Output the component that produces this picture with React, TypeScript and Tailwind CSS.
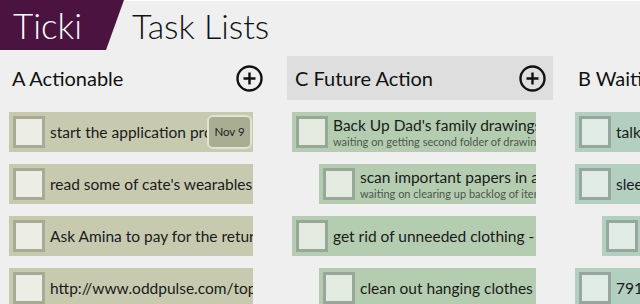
import React from "react";

type Task = {
  title: string;
  note?: string;
  due?: string;
  child?: boolean;
};

type Column = {
  name: string;
  active?: boolean;
  card: string;
  box: string;
  boxBorder: string;
  tasks: Task[];
};

const columns: Column[] = [
  {
    name: "A Actionable",
    card: "bg-[#c8cab0]",
    box: "bg-[#ecede5]",
    boxBorder: "border-[#a7aa94]",
    tasks: [
      { title: "start the application process", due: "Nov 9" },
      { title: "read some of cate's wearables articles" },
      { title: "Ask Amina to pay for the return shipping" },
      { title: "http://www.oddpulse.com/top-10-tips" },
    ],
  },
  {
    name: "C Future Action",
    active: true,
    card: "bg-[#b4cdb0]",
    box: "bg-[#e3ebe1]",
    boxBorder: "border-[#98a797]",
    tasks: [
      {
        title: "Back Up Dad's family drawings on the drive",
        note: "waiting on getting second folder of drawings",
      },
      {
        title: "scan important papers in accordion file",
        note: "waiting on clearing up backlog of items",
        child: true,
      },
      { title: "get rid of unneeded clothing - donate" },
      { title: "clean out hanging clothes closet", child: true },
    ],
  },
  {
    name: "B Waiting",
    card: "bg-[#b3cfc0]",
    box: "bg-[#e1ebe6]",
    boxBorder: "border-[#96a89e]",
    tasks: [
      { title: "talk to Mike about the lease" },
      { title: "sleeping bag back from Tom" },
      { title: "hear back about the quote", child: true },
      { title: "791 Main St paperwork" },
    ],
  },
];

function PlusCircle() {
  return (
    <svg width="27" height="27" viewBox="0 0 27 27" className="shrink-0">
      <circle cx="13.5" cy="13.5" r="12" fill="none" stroke="#111" strokeWidth="2.4" />
      <path d="M13.5 7.5v12M7.5 13.5h12" stroke="#111" strokeWidth="2.4" />
    </svg>
  );
}

function TaskCard({ task, col }: { task: Task; col: Column }) {
  return (
    <div
      className={`flex h-[40px] items-center overflow-hidden ${col.card} ${
        task.child ? "ml-[32px] w-[217px]" : "ml-[5px] w-[244px]"
      }`}
    >
      <div
        className={`ml-[4px] h-[32px] w-[32px] shrink-0 border-[3px] ${col.box} ${col.boxBorder}`}
      />
      <div className="ml-[5px] min-w-0 flex-1 overflow-hidden whitespace-nowrap">
        <div className="text-[15.5px] leading-[19px] text-[#1a1a1a]">{task.title}</div>
        {task.note && (
          <div className="text-[11px] leading-[14px] text-[#4d574c]">{task.note}</div>
        )}
      </div>
      {task.due && (
        <div className="mr-[1px] flex h-[34px] w-[45px] shrink-0 items-center justify-center rounded-[6px] border-2 border-[#e2e3d4] bg-[#a9ae92] text-[11.5px] text-[#222]">
          {task.due}
        </div>
      )}
    </div>
  );
}

export default function App() {
  return (
    <div className="h-[304px] w-[640px] overflow-hidden bg-[#efefef] font-['Lato','Open_Sans',sans-serif]">
      {/* Title bar */}
      <div className="flex h-[50px]">
        <div className="flex h-full w-[124px] shrink-0 items-center bg-[#4a1340] pl-[13px] [clip-path:polygon(0_0,124px_0,106px_100%,0_100%)]">
          <span className="text-[35px] font-light leading-none text-white">Ticki</span>
        </div>
        <div className="flex flex-1 items-center border-t border-white">
          <span className="ml-[8px] text-[34px] font-light leading-none text-[#111]">Task Lists</span>
        </div>
      </div>

      {/* Lists */}
      <div className="mt-[6px] flex gap-[17px] pl-[4px]">
        {columns.map((col) => (
          <div key={col.name} className="w-[266px] shrink-0">
            <div
              className={`flex h-[44px] items-center justify-between pl-[8px] pr-[7px] ${
                col.active ? "bg-[#dedede]" : ""
              }`}
            >
              <span className="whitespace-nowrap text-[20px] text-[#111]">{col.name}</span>
              <PlusCircle />
            </div>
            <div className="mt-[12px] flex flex-col gap-[12px]">
              {col.tasks.map((t) => (
                <TaskCard key={t.title} task={t} col={col} />
              ))}
            </div>
          </div>
        ))}
      </div>
    </div>
  );
}
